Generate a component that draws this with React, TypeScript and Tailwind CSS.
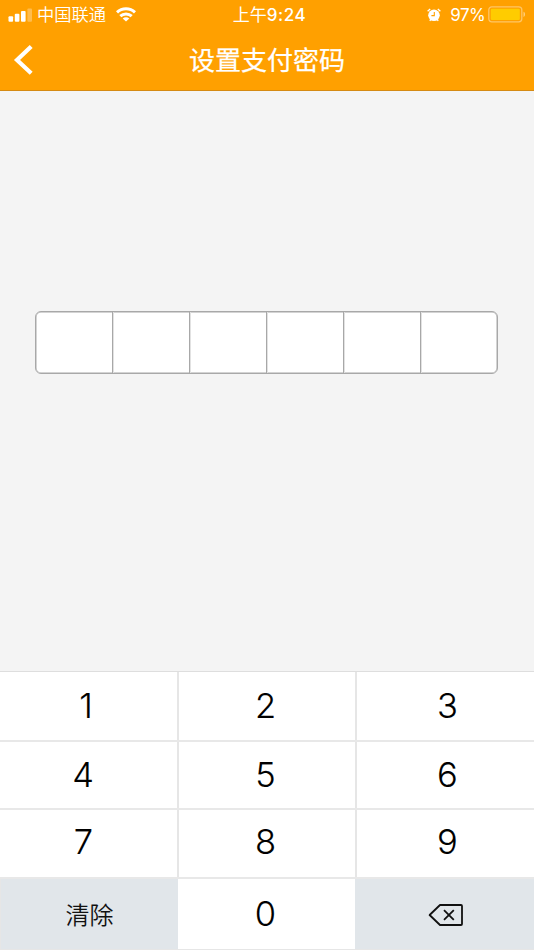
const uiFont = "font-['Inter','Noto_Sans_CJK_SC',sans-serif]";

interface KeyDef {
  label: string;
  pad: string;
}

const rows: { height: string; keys: KeyDef[] }[] = [
  {
    height: 'h-[70px] border-b-2',
    keys: [
      { label: '1', pad: 'pr-[5px]' },
      { label: '2', pad: 'pr-[3px]' },
      { label: '3', pad: 'pl-[4px]' },
    ],
  },
  {
    height: 'h-[68px] border-b-2',
    keys: [
      { label: '4', pad: 'pr-[11px]' },
      { label: '5', pad: 'pr-[3px]' },
      { label: '6', pad: 'pl-[4px]' },
    ],
  },
  {
    height: 'h-[69px] border-b-2',
    keys: [
      { label: '7', pad: 'pr-[10px] pb-[2px]' },
      { label: '8', pad: 'pr-[3px] pb-[2px]' },
      { label: '9', pad: 'pl-[4px] pb-[2px]' },
    ],
  },
];

function Signal() {
  return (
    <svg width="24" height="15" viewBox="0 0 24 15" fill="white">
      <rect x=".5" y="8.2" width="4.6" height="5.6" rx="1" />
      <rect x="6.8" y="5.8" width="4.6" height="8" rx="1" />
      <rect x="13" y="3" width="4.6" height="10.8" rx="1" />
      <rect x="19.4" y=".4" width="4.6" height="13.4" rx="1" opacity="0.3" />
    </svg>
  );
}

function Wifi() {
  return (
    <svg width="20" height="15" viewBox="0 0 20 15" fill="none" stroke="white" strokeWidth="3">
      <path d="M1 5.3C6 .5 14 .5 19 5.3" />
      <path d="M4.3 9.2c3.2-3 8.2-3 11.4 0" />
      <path d="M10 14.6 6.7 11.4c1.8-1.7 4.8-1.7 6.6 0Z" fill="white" stroke="none" />
    </svg>
  );
}

function Alarm() {
  return (
    <svg width="14" height="14" viewBox="0 0 14 14" fill="none">
      <circle cx="7" cy="7.3" r="5.8" fill="white" />
      <path d="M.6 3.3 3.2 1M13.4 3.3 10.8 1M2.8 12.8l1-1.3M11.2 12.8l-1-1.3" stroke="white" strokeWidth="1.3" />
      <path d="M7.3 3.9v3.7H4.4" stroke="#ffa000" strokeWidth="1.1" />
    </svg>
  );
}

function Battery() {
  return (
    <svg width="38" height="17" viewBox="0 0 38 17" fill="none">
      <rect x=".8" y=".8" width="33" height="15" rx="3" stroke="#ffc565" strokeWidth="1.3" />
      <rect x="2.8" y="2.7" width="29" height="11.3" rx="1.2" fill="#ffcc00" />
      <path d="M35.5 5.8c2 .6 2 4.6 0 5.2Z" fill="#ffce7d" />
    </svg>
  );
}

function StatusBar() {
  return (
    <div className="grid h-[30px] grid-cols-[1fr_76px_1fr] items-center text-white">
      <div className="flex h-[30px] items-center pl-2">
        <Signal />
        <span className="ml-[5px] text-[17.3px] leading-[30px] font-[350]">中国联通</span>
        <span className="ml-[10px] pb-[2px]"><Wifi /></span>
      </div>
      <div className="flex h-[30px] items-center justify-center pl-[5px] leading-[30px] whitespace-nowrap">
        <span className="text-[17px] font-normal">上午</span>
        <span className="text-[17px] font-medium tracking-[0.55px]">9:24</span>
      </div>
      <div className="flex h-[30px] items-center justify-end pr-[8px] pb-px">
        <Alarm />
        <span className="ml-[9px] text-[17px] leading-[30px] tracking-[-0.6px]">97%</span>
        <span className="ml-[3px]"><Battery /></span>
      </div>
    </div>
  );
}

function Key({ label, pad }: KeyDef) {
  return (
    <button className={`flex items-center justify-center bg-white text-[34.5px] leading-none font-light text-black [-webkit-text-stroke:0.1px_black] ${pad}`}>
      {label}
    </button>
  );
}

export default function App() {
  return (
    <div className={`flex h-[950px] w-[534px] flex-col overflow-hidden bg-[#f4f4f4] ${uiFont}`}>
      <header className="h-[91px] shrink-0 border-b border-[#d58a13] bg-[#ffa000]">
        <StatusBar />
        <div className="grid h-[60px] grid-cols-[60px_1fr_60px] items-center text-white">
          <button className="pb-[2px] pl-[13px]" aria-label="返回">
            <svg width="22" height="32" viewBox="0 0 22 32" fill="none" stroke="white" strokeWidth="4.2">
              <path d="M18.2 2.5 4 16l14.2 13.2" />
            </svg>
          </button>
          <h1 className="pt-px text-center text-[26px] leading-[60px] font-normal [-webkit-text-stroke:0.25px_white]">设置支付密码</h1>
        </div>
      </header>

      <main className="flex-1 pt-[220px] pl-[35px]">
        <div className="flex h-[63px] w-[463px] overflow-hidden rounded-[6px] border border-[#a8a8a8] bg-white shadow-[inset_0_0_0_0.5px_#a8a8a8]">
          {[0, 1, 2, 3, 4].map((i) => (
            <div key={i} className="w-[77px] shrink-0 border-r border-[#a8a8a8] shadow-[1px_0_0_#e2e2e2]" />
          ))}
          <div className="flex-1" />
        </div>
      </main>

      <section className="h-[279px] shrink-0 border-t border-[#dedede] bg-white">
        {rows.map((row, i) => (
          <div
            key={i}
            className={`grid grid-cols-[177px_176px_177px] gap-x-[2px] border-[#e8e8e8] bg-[#e6e6e6] ${row.height}`}
          >
            {row.keys.map((key) => (
              <Key key={key.label} {...key} />
            ))}
          </div>
        ))}
        <div className="grid h-[71px] grid-cols-[177px_177px_179px] border-b border-l border-[#e6e6e6]">
          <button className="bg-[#e1e6ea] pt-[4px] text-[24px] leading-none font-[350] text-[#111]">清除</button>
          <Key label="0" pad="pr-[2px]" />
          <button className="flex items-center justify-center bg-[#e1e6ea] pt-[2px] pl-[2px]" aria-label="删除">
            <svg width="36" height="24" viewBox="0 0 36 24" fill="none" stroke="#111" strokeWidth="1.8">
              <path d="M1.6 12 12 2h21q1 0 1 1v18q0 1-1 1H12Z" strokeLinejoin="round" />
              <path d="m16 7.2 9.8 9.6M25.8 7.2 16 16.8" />
            </svg>
          </button>
        </div>
      </section>
    </div>
  );
}
